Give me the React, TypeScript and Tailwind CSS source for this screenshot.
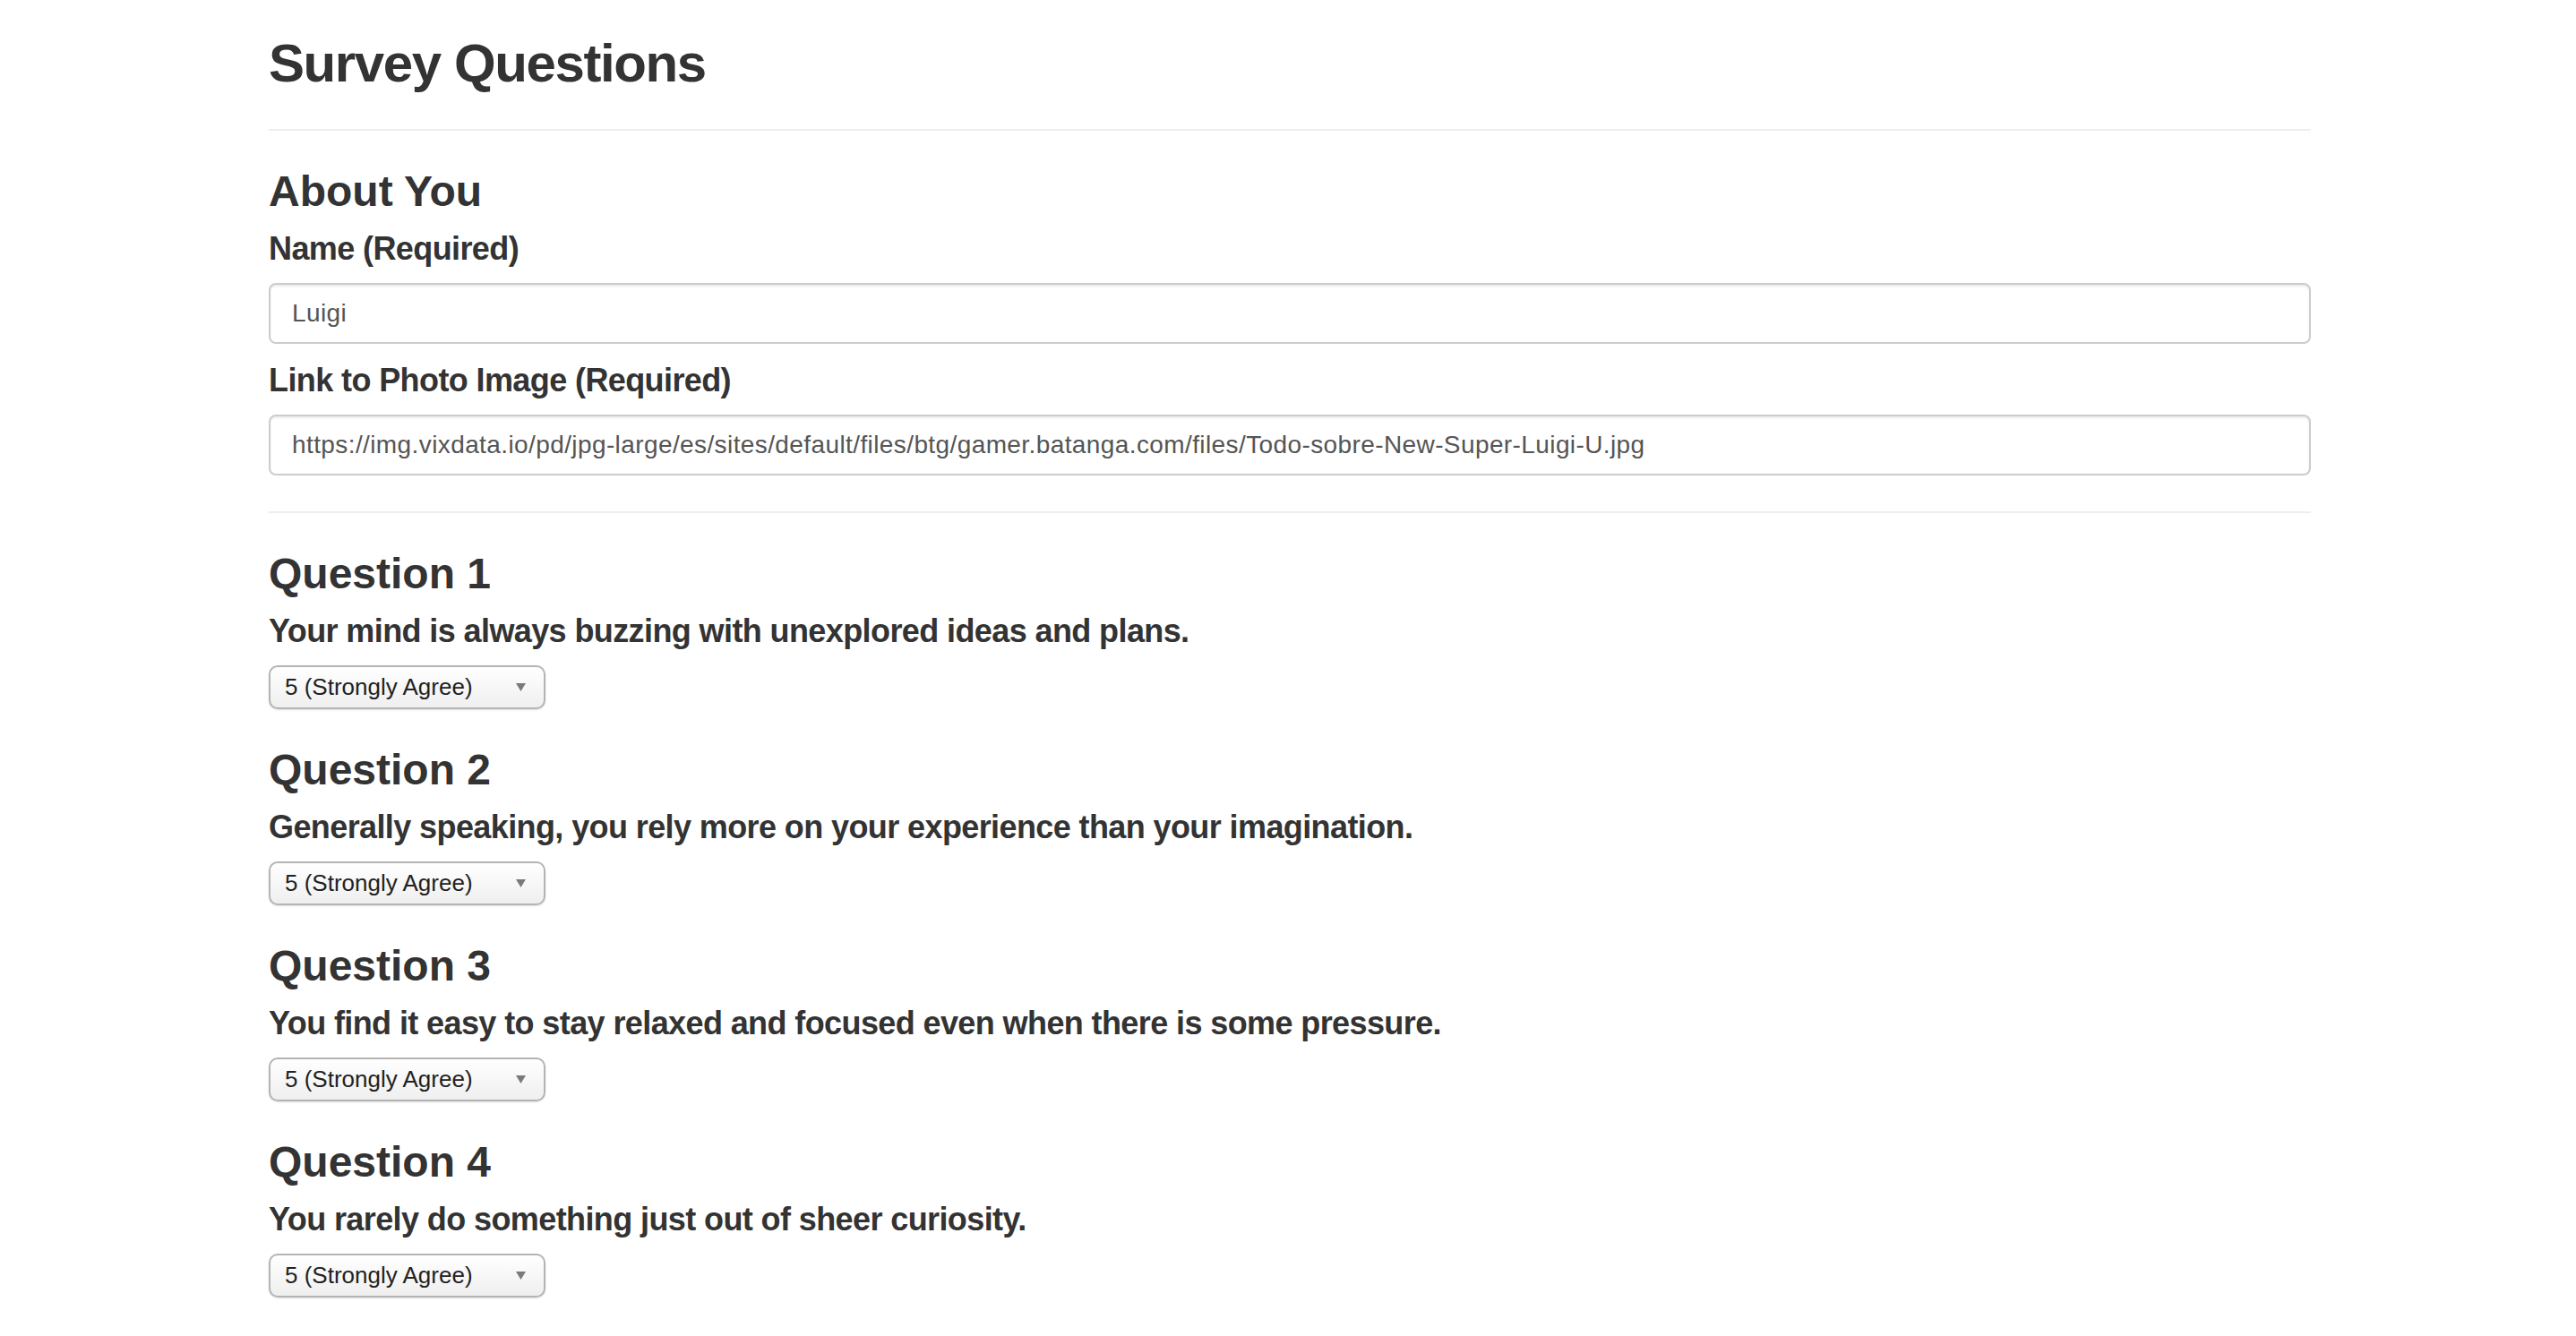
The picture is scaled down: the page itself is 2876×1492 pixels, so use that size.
import React from "react";

const questions = [
  "Your mind is always buzzing with unexplored ideas and plans.",
  "Generally speaking, you rely more on your experience than your imagination.",
  "You find it easy to stay relaxed and focused even when there is some pressure.",
  "You rarely do something just out of sheer curiosity.",
];

const font = "font-['Liberation_Sans','Helvetica_Neue',Arial,sans-serif]";

const inputCls =
  "block h-[68px] w-full rounded-[8px] border-2 border-[#cccccc] bg-white px-[24px] text-[28px] tracking-[0.4px] text-[#555555] shadow-[inset_0_2px_2px_rgba(0,0,0,0.075)] outline-none";

const labelCls = "text-[36px] font-bold leading-[40px] tracking-[-0.6px]";

const ScoreSelect = () => (
  <div className="relative w-[309px]">
    <select
      defaultValue="5"
      className="block h-[49px] w-full appearance-none rounded-[10px] border-2 border-[#b4b4b4] bg-gradient-to-b from-white to-[#efefef] pl-[16px] text-[26px] text-[#222222] shadow-[0_1px_2px_rgba(0,0,0,0.12)] outline-none"
    >
      <option value="1">1 (Strongly Disagree)</option>
      <option value="2">2</option>
      <option value="3">3</option>
      <option value="4">4</option>
      <option value="5">5 (Strongly Agree)</option>
    </select>
    <svg
      className="pointer-events-none absolute right-[22px] top-[20px]"
      width="11"
      height="9"
      viewBox="0 0 11 9"
    >
      <path d="M0 0 H11 L5.5 9 Z" fill="#7a7a7a" />
    </svg>
  </div>
);

export default function App() {
  return (
    <div className={`min-h-screen bg-white ${font} text-[#333333]`}>
      <div className="mx-auto max-w-[2340px] pl-[32px] pr-[28px] pb-[60px]">
        <div className="border-b-2 border-[#eeeeee] pb-[40px] pt-[38px]">
          <h2 className="text-[60px] font-bold leading-[66px] tracking-[-1.4px]">
            Survey Questions
          </h2>
        </div>

        <div className="flex flex-col border-b-2 border-[#eeeeee] pb-[40px] pt-[41px]">
          <h3 className="text-[48px] font-bold leading-[53px]">About You</h3>
          <label className={`mt-[18px] ${labelCls}`}>Name (Required)</label>
          <input className={`mt-[18px] ${inputCls}`} defaultValue="Luigi" />
          <label className={`mt-[21px] ${labelCls}`}>Link to Photo Image (Required)</label>
          <input
            className={`mt-[18px] ${inputCls}`}
            defaultValue="https://img.vixdata.io/pd/jpg-large/es/sites/default/files/btg/gamer.batanga.com/files/Todo-sobre-New-Super-Luigi-U.jpg"
          />
        </div>

        <div className="flex flex-col">
          {questions.map((q, i) => (
            <div key={i} className="mt-[41px] flex flex-col">
              <h3 className="text-[48px] font-bold leading-[53px]">Question {i + 1}</h3>
              <p className={`mt-[18px] ${labelCls}`}>{q}</p>
              <div className="mt-[18px]">
                <ScoreSelect />
              </div>
            </div>
          ))}
        </div>
      </div>
    </div>
  );
}
